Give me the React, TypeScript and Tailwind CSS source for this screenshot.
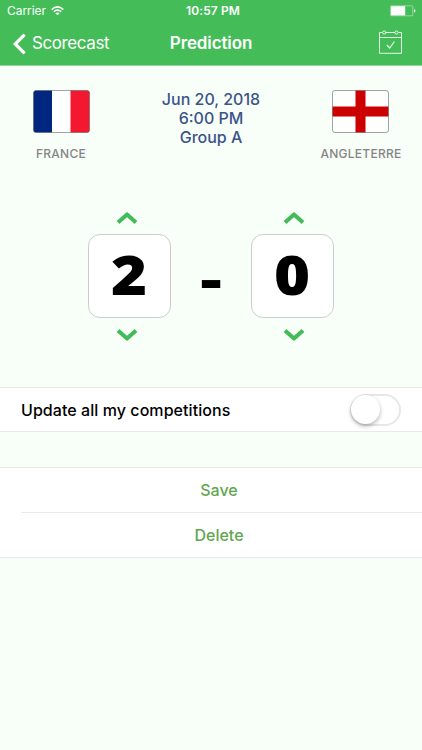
import React, { useState } from 'react';

interface Team {
  name: string;
  flag: React.ReactNode;
}

const FranceFlag = () => (
  <svg className="w-[57px] h-[43px]" viewBox="0 0 57 43">
    <clipPath id="fr">
      <rect x="0.5" y="0.5" width="56" height="42" rx="2.5" />
    </clipPath>
    <g clipPath="url(#fr)">
      <rect width="57" height="43" fill="#fff" />
      <rect width="19" height="43" fill="#00267f" />
      <rect x="37.5" width="20" height="43" fill="#f31830" />
    </g>
    <rect x="0.5" y="0.5" width="56" height="42" rx="2.5" fill="none" stroke="#555" strokeOpacity="0.55" />
  </svg>
);

const EnglandFlag = () => (
  <svg className="w-[57px] h-[43px]" viewBox="0 0 57 43">
    <rect x="0.5" y="0.5" width="56" height="42" rx="2.5" fill="#fff" />
    <rect x="23.5" y="0.5" width="10" height="42" fill="#cc0000" />
    <rect x="0.5" y="16.5" width="56" height="10" fill="#cc0000" />
    <rect x="0.5" y="0.5" width="56" height="42" rx="2.5" fill="none" stroke="#555" strokeOpacity="0.55" />
  </svg>
);

const Chevron = ({ down = false }: { down?: boolean }) => (
  <svg className={down ? 'w-[22px] h-[14px] rotate-180' : 'w-[22px] h-[14px]'} viewBox="0 0 22 14">
    <path d="M2 11.6 L11 3.4 L20 11.6" fill="none" stroke="#43bb58" strokeWidth="4" strokeLinejoin="round" />
  </svg>
);

const StatusBar = () => (
  <div className="grid grid-cols-3 items-center h-[22px] pl-[7px] pr-[6px] text-[12px] leading-[22px]">
    <div className="flex items-center gap-[5px]">
      <span className="tracking-[-0.05px]">Carrier</span>
      <svg className="w-[13px] h-[10px]" viewBox="0 0 13 10" fill="none" stroke="#fff" strokeWidth="1.5">
        <path d="M0.7 3.6 Q6.5 -1.8 12.3 3.6" />
        <path d="M2.8 5.8 Q6.5 2.4 10.2 5.8" />
        <path d="M6.5 9.3 L4.4 7.2 Q6.5 5.6 8.6 7.2 Z" fill="#fff" stroke="none" />
      </svg>
    </div>
    <span className="text-center font-semibold tracking-[0.1px] pl-[3px]">10:57 PM</span>
    <svg className="w-[26px] h-[12px] justify-self-end" viewBox="0 0 26 12">
      <rect x="0.5" y="0.8" width="22.3" height="10" rx="0.8" fill="none" stroke="#fff" strokeOpacity="0.6" strokeWidth="0.7" />
      <rect x="1" y="1.2" width="14.2" height="9.2" fill="#fff" />
      <path d="M24 4 Q25.4 4.4 25.4 5.8 Q25.4 7.2 24 7.6 Z" fill="#fff" />
    </svg>
  </div>
);

const NavBar = () => (
  <div className="grid grid-cols-[1fr_auto_1fr] items-center h-[43px] pl-[13px] pr-[19px]">
    <button className="flex items-center gap-[6px]">
      <svg className="w-[13px] h-[22px]" viewBox="0 0 13 22">
        <path d="M11.6 1.6 L2.2 11 L11.6 20.4" fill="none" stroke="#fff" strokeWidth="3.2" />
      </svg>
      <span className="text-[17px] tracking-[-0.4px]">Scorecast</span>
    </button>
    <h1 className="pl-[6px] text-[17px] font-semibold tracking-[-0.12px]">Prediction</h1>
    <svg className="w-[25px] h-[24px] mb-[3px] justify-self-end" viewBox="0 0 25 24" fill="none" stroke="#fff" strokeOpacity="0.85" strokeWidth="1">
      <path d="M4.2 2.5 H1.5 V23.3 H23.5 V2.5 H20.5 M7.6 2.5 H17" />
      <path d="M1.5 7.5 H23.5" />
      <circle cx="6.2" cy="2.5" r="1.6" />
      <circle cx="18.5" cy="2.5" r="1.6" />
      <path d="M8.8 15 L11.7 18 L16.4 11.5" strokeWidth="1.2" />
    </svg>
  </div>
);

const TeamBadge = ({ name, flag }: Team) => (
  <div className="flex flex-col items-center w-[90px]">
    {flag}
    <span className="mt-[13px] text-[12px] leading-[16px] font-medium tracking-[0.25px] text-[#858585]">{name}</span>
  </div>
);

interface ScorePickerProps {
  value: number;
  onChange: (value: number) => void;
  arrowClass: string;
}

const ScorePicker = ({ value, onChange, arrowClass }: ScorePickerProps) => (
  <div className="flex flex-col items-center w-[83px]">
    <button className={arrowClass} onClick={() => onChange(value + 1)}>
      <Chevron />
    </button>
    <div className="mt-[9px] flex items-center justify-center w-[83px] h-[84px] rounded-[12px] border border-[#cccccc] bg-white font-['Open_Sans','Liberation_Sans',sans-serif] text-[55px] leading-[84px] font-extrabold text-black">
      <span className="pb-[4px] scale-x-112">{value}</span>
    </div>
    <button className={`mt-[10px] ${arrowClass}`} onClick={() => onChange(Math.max(0, value - 1))}>
      <Chevron down />
    </button>
  </div>
);

const App: React.FC = () => {
  const [home, setHome] = useState(2);
  const [away, setAway] = useState(0);
  const [updateAll, setUpdateAll] = useState(false);

  return (
    <div className="w-full h-[750px] overflow-hidden bg-[#f8fff8] font-['Inter','Liberation_Sans',sans-serif]">
      <header className="h-[66px] bg-[#44bd59] text-white border-b border-[#94d8a0]">
        <StatusBar />
        <NavBar />
      </header>

      {/* Match */}
      <section className="flex justify-between h-[145px] pt-[24px] pl-[16px] pr-[16px]">
        <TeamBadge name="FRANCE" flag={<FranceFlag />} />
        <div className="text-center text-[16px] leading-[19px] font-medium text-[#3b5488]">
          <p>Jun 20, 2018</p>
          <p>6:00 PM</p>
          <p>Group A</p>
        </div>
        <TeamBadge name="ANGLETERRE" flag={<EnglandFlag />} />
      </section>

      {/* Score */}
      <section className="flex justify-center h-[176px]">
        <ScorePicker value={home} onChange={setHome} arrowClass="pr-[5px]" />
        <span className="w-[80px] pt-[28px] text-center text-[54px] leading-[84px] font-black text-black">-</span>
        <ScorePicker value={away} onChange={setAway} arrowClass="pl-[3px]" />
      </section>

      <section className="flex items-center justify-between h-[45px] pl-[21px] pr-[21px] bg-white border-y border-[#e5ebe8]">
        <span className="text-[16px] font-medium tracking-[0.06px] text-black">Update all my competitions</span>
        <button
          role="switch"
          aria-checked={updateAll}
          onClick={() => setUpdateAll(!updateAll)}
          className={`flex items-center w-[51px] h-[32px] rounded-full border-2 border-[#e6e8e6] bg-white ${updateAll ? 'justify-end' : 'justify-start'}`}
        >
          <span className="-ml-px w-[29px] h-[29px] rounded-full bg-white shadow-[0_2px_4px_rgba(0,0,0,0.3)]" />
        </button>
      </section>

      {/* Actions */}
      <section className="mt-[35px] bg-white border-y border-[#e5ebe8] text-[16px] font-medium text-[#61a650]">
        <button className="block w-full h-[44px] pl-[16px]">Save</button>
        <div className="ml-[21px] h-px bg-[#e8ebe8]" />
        <button className="block w-full h-[44px] pl-[16px]">Delete</button>
      </section>
    </div>
  );
};

export default App;
